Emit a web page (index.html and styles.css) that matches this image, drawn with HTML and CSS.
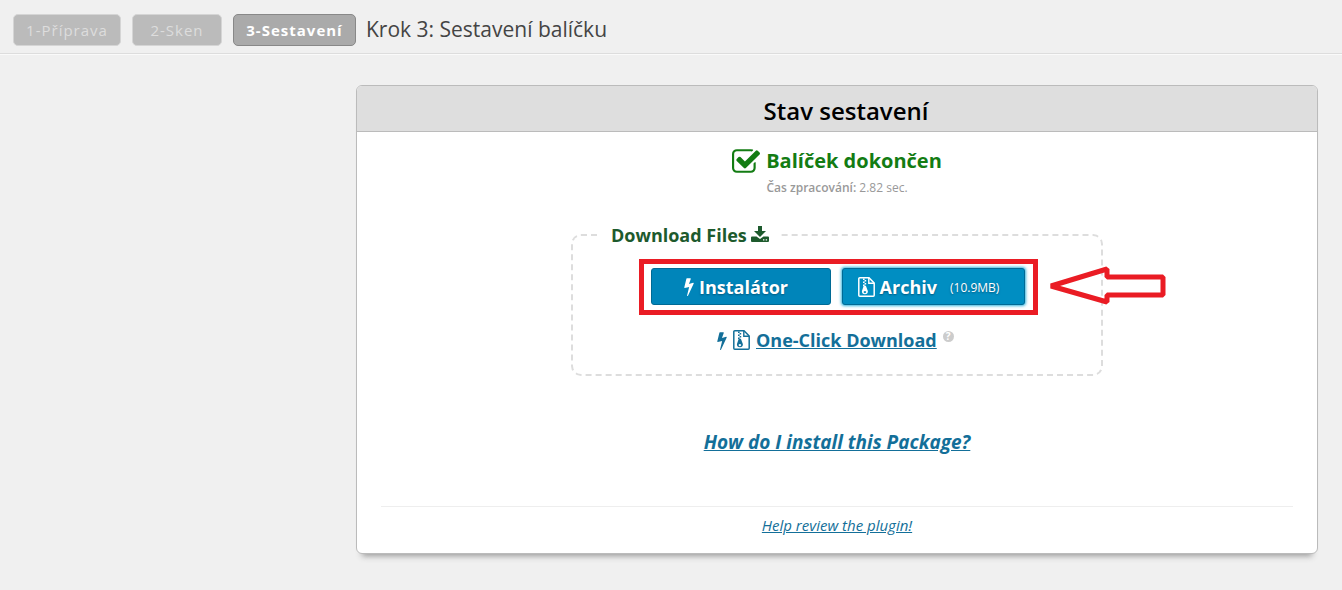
FILE: index.html
```html
<!DOCTYPE html>
<html lang="cs">
<head>
    <meta charset="UTF-8">
    <meta name="viewport" content="width=device-width, initial-scale=1.0">
    <title>Krok 3: Sestavení balíčku</title>
    <link rel="stylesheet" href="styles.css">
</head>
<body>
    <!-- Shared icons -->
    <svg class="icon-defs" aria-hidden="true">
        <symbol id="icon-bolt" viewBox="448 0 896 1792">
            <path d="M1333 566q18 20 7 44l-540 1157q-13 25-42 25-4 0-14-2-17-5-25.5-19t-4.5-30l197-808-406 101q-4 1-12 1-18 0-31-11-18-15-13-39l201-825q4-14 16-23t28-9h328q19 0 32 12.5t13 29.5q0 8-5 18l-171 463 396-98q8-2 12-2 19 0 34 15z" fill="currentColor"/>
        </symbol>
        <symbol id="icon-archive" viewBox="0 0 17 20">
            <path d="M1.5 .8H11L16.2 6v12.2a1 1 0 0 1-1 1H1.8a1 1 0 0 1-1-1V1.8a1 1 0 0 1 1-1z" fill="none" stroke="currentColor" stroke-width="1.5"/>
            <path d="M10.8 1v5.2H16" fill="none" stroke="currentColor" stroke-width="1.4"/>
            <path d="M5 1.5h1.6V3H5zM6.6 3h1.6v1.5H6.6zM5 4.5h1.6V6H5zM6.6 6h1.6v1.5H6.6zM5 7.5h1.6V9H5z" fill="currentColor"/>
            <path fill-rule="evenodd" d="M5.7 8.8h2.2l2 5.4a3 3 0 1 1-6 0zM6.9 14a1.3 1 0 1 0 .01 0z" fill="currentColor"/>
        </symbol>
    </svg>

    <header class="wizard-bar">
        <div class="wizard-steps">
            <button class="step step-prepare" type="button" disabled>1-Příprava</button>
            <button class="step step-scan" type="button" disabled>2-Sken</button>
            <button class="step step-build active" type="button">3-Sestavení</button>
        </div>
        <h1 class="wizard-title">Krok 3: Sestavení balíčku</h1>
    </header>

    <main class="panel">
        <h2 class="panel-title">Stav sestavení</h2>
        <div class="panel-body">
            <div class="status">
                <svg class="status-icon" viewBox="64 128 1664 1408" aria-hidden="true">
                    <path d="M1472 930v318q0 119-84.5 203.5t-203.5 84.5h-832q-119 0-203.5-84.5t-84.5-203.5v-832q0-119 84.5-203.5t203.5-84.5h832q63 0 117 25 15 7 18 23 3 17-9 29l-49 49q-10 10-23 10-3 0-9-2-23-6-45-6h-832q-66 0-113 47t-47 113v832q0 66 47 113t113 47h832q66 0 113-47t47-113v-254q0-13 9-22l64-64q10-10 23-10 6 0 12 3 20 8 20 29zm231-489l-814 814q-24 24-57 24t-57-24l-430-430q-24-24-24-57t24-57l110-110q24-24 57-24t57 24l263 263 647-647q24-24 57-24t57 24l110 110q24 24 24 57t-24 57z" fill="currentColor"/>
                </svg>
                <span>Balíček dokončen</span>
            </div>
            <p class="runtime"><b>Čas zpracování:</b> 2.82 sec.</p>

            <fieldset class="downloads">
                <legend>
                    Download Files
                    <svg class="download-icon" viewBox="0 0 18 16" aria-hidden="true">
                        <path d="M7 0h4v5h4l-6 6-6-6h4z" fill="currentColor"/>
                        <path fill-rule="evenodd" d="M1 10.5h4.500L9 13l3.500-2.500H17a1 1 0 0 1 1 1V15a1 1 0 0 1-1 1H1a1 1 0 0 1-1-1v-3.500a1 1 0 0 1 1-1zM12 13.200v1.400h1.400v-1.400zM14.700 13.200v1.400h1.400v-1.400z" fill="currentColor"/>
                    </svg>
                </legend>

                <div class="download-buttons">
                    <button class="download-button installer" type="button">
                        <svg class="bolt" aria-hidden="true"><use href="#icon-bolt"/></svg>
                        Instalátor
                    </button>
                    <button class="download-button focused" type="button">
                        <svg class="archive" aria-hidden="true"><use href="#icon-archive"/></svg>
                        Archiv <span class="size">(10.9MB)</span>
                    </button>
                    <svg class="arrow" viewBox="0 0 120 42" aria-hidden="true">
                        <path d="M4 21L60 4V12H116V30H60V37Z" fill="none" stroke="#ea1c24" stroke-width="5" stroke-linejoin="bevel"/>
                    </svg>
                </div>

                <div class="one-click">
                    <svg class="bolt" aria-hidden="true"><use href="#icon-bolt"/></svg>
                    <svg class="archive" aria-hidden="true"><use href="#icon-archive"/></svg>
                    <a href="#">One-Click Download</a>
                    <span class="help">?</span>
                </div>
            </fieldset>

            <a class="install-link" href="#">How do I install this Package?</a>

            <footer class="panel-footer">
                <a href="#">Help review the plugin!</a>
            </footer>
        </div>
    </main>
</body>
</html>
```
FILE: styles.css
```css
* {
    box-sizing: border-box;
    margin: 0;
    padding: 0;
}

body {
    min-height: 100vh;
    background-color: #f0f0f0;
    color: #444;
    font-family: "Open Sans", "Segoe UI", sans-serif;
    font-size: 14px;
}

a {
    color: #136f99;
}

.icon-defs {
    position: absolute;
    width: 0;
    height: 0;
}

.wizard-bar {
    display: flex;
    align-items: center;
    gap: 10px;
    height: 54px;
    padding: 6px 13px 0;
    border-bottom: 1px solid #ddd;
    box-shadow: 0 1px 0 #fafafa;
}

.wizard-steps {
    display: flex;
    gap: 11px;
}

.step {
    height: 32px;
    background-color: #bbb;
    border: 1px solid #d5d5d5;
    border-radius: 5px;
    color: #ddd;
    font-family: inherit;
    font-size: 15px;
    letter-spacing: 1px;
    text-align: center;
}

.step-prepare {
    width: 108px;
}

.step-scan {
    width: 90px;
}

.step-build {
    width: 123px;
}

.step.active {
    background-color: #aaa;
    border-color: #888;
    color: #fff;
    font-weight: 700;
}

.wizard-title {
    margin-bottom: 2px;
    font-size: 21px;
    font-weight: 400;
    line-height: 30px;
}

.panel {
    margin: 31px 24px 0 356px;
    background-color: #fff;
    border: 1px solid #bbb;
    border-radius: 6px;
    box-shadow: 0 8px 6px -6px #999;
}

.panel-title {
    height: 46px;
    padding-left: 18px;
    background-color: #dedede;
    border-bottom: 1px solid #bbb;
    border-radius: 5px 5px 0 0;
    color: #000;
    font-size: 24px;
    font-weight: 600;
    line-height: 50px;
    text-align: center;
}

.panel-body {
    display: flex;
    flex-direction: column;
    align-items: center;
    padding: 14px 24px 16px;
}

.status {
    display: flex;
    align-items: center;
    gap: 6px;
    color: #137c13;
    font-size: 20px;
    font-weight: 700;
    line-height: 30px;
}

.status-icon {
    width: 28px;
    height: 24px;
}

.runtime {
    color: #999;
    font-size: 12px;
    line-height: 24px;
}

.runtime b {
    font-weight: 600;
}

.downloads {
    width: 532px;
    height: 153px;
    margin-top: 23px;
    padding: 0 0 0 26px;
    border: 2px dashed #ddd;
    border-radius: 10px;
}

.downloads legend {
    padding: 0 12px;
    color: #1d5a2d;
    font-size: 18px;
    font-weight: 700;
    line-height: 24px;
}

.download-icon {
    width: 18px;
    height: 16px;
}

.download-buttons {
    position: relative;
    display: flex;
    gap: 11px;
    width: 399px;
    height: 56px;
    margin: 12px 0 0 40px;
    padding: 4px 8px 4px 7px;
    border: 5px solid #ea1c24;
}

.download-button {
    display: flex;
    flex: 1;
    align-items: center;
    justify-content: center;
    gap: 5px;
    height: 37px;
    padding-right: 10px;
    background-color: #008ec2;
    border: 1px solid #006a95;
    border-radius: 3px;
    color: #fff;
    font-family: inherit;
    font-size: 18px;
    font-weight: 700;
    text-shadow: 0 1px 2px #005a80;
    cursor: pointer;
}

.download-button.installer {
    flex: 0 0 180px;
    background-color: #0085ba;
}

.download-button.focused {
    box-shadow: 0 0 3px 1px #33b3db;
}

.size {
    margin: 2px 0 0 8px;
    font-size: 12px;
    font-weight: 400;
}

.bolt {
    width: 10px;
    height: 19px;
}

.archive {
    width: 17px;
    height: 20px;
}

/* points at the buttons from outside the frame */
.arrow {
    position: absolute;
    top: 1px;
    left: 403px;
    width: 120px;
    height: 42px;
}

.one-click {
    display: flex;
    align-items: center;
    gap: 6px;
    margin: 12px 0 0 118px;
    color: #136f99;
    font-size: 18px;
    font-weight: 700;
    line-height: 26px;
}

.help {
    width: 11px;
    height: 11px;
    margin-bottom: 8px;
    background-color: #ccc;
    border-radius: 50%;
    color: #fff;
    font-size: 10px;
    line-height: 11px;
    text-align: center;
}

.install-link {
    margin-top: 52px;
    font-size: 19px;
    font-style: italic;
    font-weight: 700;
    line-height: 28px;
}

.panel-footer {
    width: 100%;
    margin-top: 50px;
    padding-top: 6px;
    border-top: 1px solid #eee;
    font-size: 15px;
    font-style: italic;
    line-height: 24px;
    text-align: center;
}
```
